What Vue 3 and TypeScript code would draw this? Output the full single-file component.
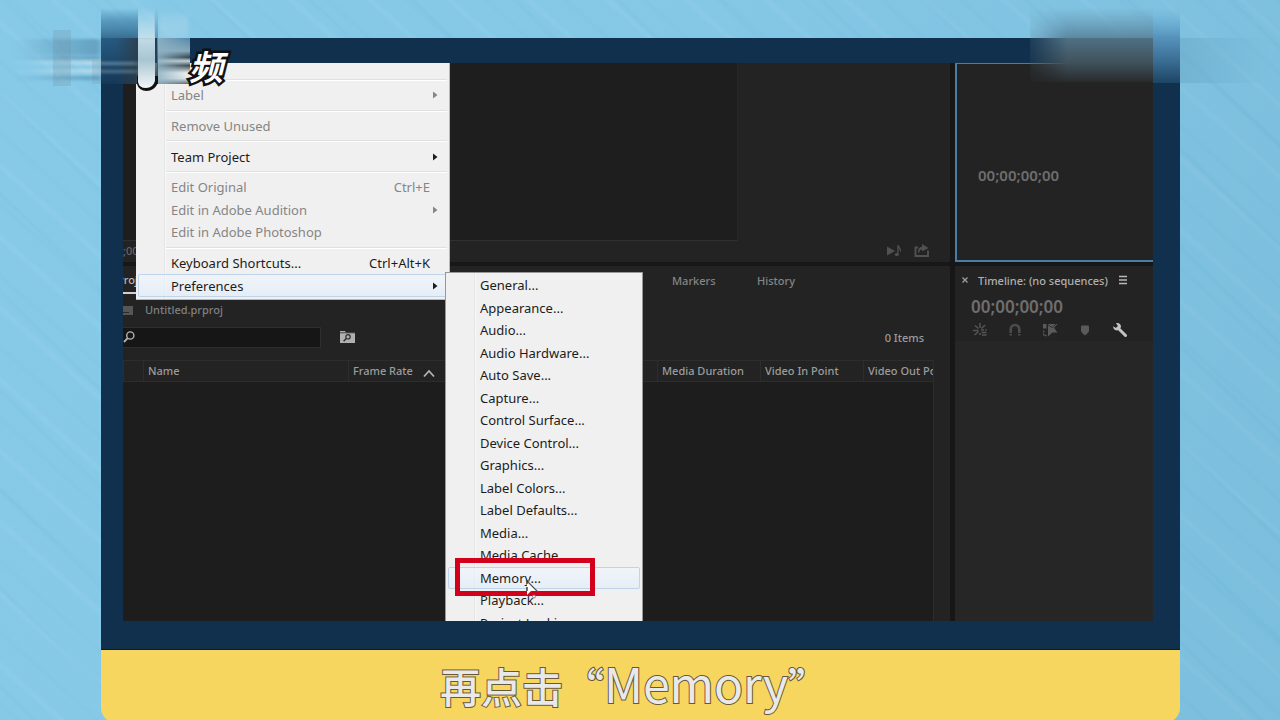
<script setup lang="ts">
import { ref } from 'vue'

interface MenuItem {
  label: string
  shortcut?: string
  submenu?: boolean
  disabled?: boolean
  active?: boolean
}

const editGroups: MenuItem[][] = [
  [{ label: 'Label', submenu: true, disabled: true }],
  [{ label: 'Remove Unused', disabled: true }],
  [{ label: 'Team Project', submenu: true }],
  [
    { label: 'Edit Original', shortcut: 'Ctrl+E', disabled: true },
    { label: 'Edit in Adobe Audition', submenu: true, disabled: true },
    { label: 'Edit in Adobe Photoshop', disabled: true },
  ],
  [
    { label: 'Keyboard Shortcuts...', shortcut: 'Ctrl+Alt+K' },
    { label: 'Preferences', submenu: true, active: true },
  ],
]

const preferences: string[] = [
  'General...', 'Appearance...', 'Audio...', 'Audio Hardware...', 'Auto Save...',
  'Capture...', 'Control Surface...', 'Device Control...', 'Graphics...',
  'Label Colors...', 'Label Defaults...', 'Media...', 'Media Cache...',
  'Memory...', 'Playback...', 'Project Locking...',
]

const query = ref('')
</script>

<template>
  <div class="page">
    <main class="frame">
      <div class="screen">
        <section class="panel source">
          <div class="video"></div>
          <div class="transport">
            <span>;00</span>
            <svg class="icon-play" viewBox="0 0 18 16" width="18" height="16">
              <path d="M2 3.500l8 4.500-8 4.500z" fill="#515151" />
              <path d="M13 2v9M13 2c.5 3 3 3 2.500 6.500" fill="none" stroke="#515151" stroke-width="1.300" />
              <ellipse cx="11.800" cy="11.500" rx="2" ry="1.600" fill="#515151" />
            </svg>
            <svg viewBox="0 0 18 16" width="18" height="16">
              <path d="M5 4.500H2.500V13H15V7.500" fill="none" stroke="#515151" stroke-width="1.900" />
              <path d="M5 9.500c0-4 1.500-5.500 4-5.500V1l6.500 4L9 8.500V6.500C7 6.500 6.500 7.500 6.500 9.500z" fill="#515151" />
            </svg>
          </div>
        </section>

        <section class="panel program">
          <span class="timecode small">00;00;00;00</span>
        </section>

        <section class="panel project">
          <div class="tabs">
            <button type="button" class="tab current">Project</button>
            <button type="button" class="tab">Markers</button>
            <button type="button" class="tab">History</button>
          </div>
          <div class="path">
            <svg viewBox="0 0 10 12" width="10" height="12">
              <path d="M0 3h10v9H0z" fill="#565656" />
              <path d="M0 9.500h6" stroke="#2b2b2b" />
            </svg>
            <span>Untitled.prproj</span>
          </div>
          <div class="search-row">
            <label class="search">
              <svg viewBox="0 0 12 14" width="12" height="14">
                <circle cx="7.300" cy="5.500" r="3.600" fill="none" stroke="#b4b4b4" stroke-width="1.400" />
                <path d="M4.700 8.200L1 12" stroke="#b4b4b4" stroke-width="1.800" />
              </svg>
              <input v-model="query" type="text" aria-label="Search project" />
            </label>
            <button type="button" class="bin" aria-label="Search bin">
              <svg viewBox="0 0 16 14" width="16" height="14">
                <path d="M1 1h5l1 1.500h9V13H1z" fill="#b0b0b0" />
                <path d="M0 2.800h16" stroke="#232323" stroke-width=".8" />
                <circle cx="9" cy="6.800" r="2.200" fill="none" stroke="#2a2a2a" stroke-width="1.200" />
                <path d="M7.300 8.500l-2.700 2.700" stroke="#2a2a2a" stroke-width="1.400" />
              </svg>
            </button>
            <span class="count">0 Items</span>
          </div>
          <div class="listing">
            <table>
              <colgroup>
                <col class="c-tag" /><col class="c-name" /><col class="c-std" /><col class="c-std" />
                <col class="c-std" /><col class="c-std" /><col class="c-std" /><col />
              </colgroup>
              <thead>
                <tr>
                  <th></th>
                  <th>Name</th>
                  <th>
                    Frame Rate
                    <svg class="sort" viewBox="0 0 14 10" width="14" height="10">
                      <path d="M2 8.500l5-5.500 5 5.500" fill="none" stroke="#b4b4b4" stroke-width="1.800" />
                    </svg>
                  </th>
                  <th></th>
                  <th></th>
                  <th>Media Duration</th>
                  <th>Video In Point</th>
                  <th>Video Out Point</th>
                </tr>
              </thead>
            </table>
          </div>
        </section>

        <section class="panel timeline">
          <div class="timeline-head">
            <button type="button" class="close" aria-label="Close">
              <svg viewBox="0 0 8 8" width="8" height="8">
                <path d="M1.500 1.500l5 5M6.500 1.500l-5 5" stroke="#a0a0a0" stroke-width="1.200" />
              </svg>
            </button>
            <span class="timeline-title">Timeline: (no sequences)</span>
            <button type="button" class="burger" aria-label="Panel menu">
              <svg viewBox="0 0 10 10" width="10" height="10">
                <path d="M1 1.500h8M1 5h8M1 8.500h8" stroke="#b8b8b8" stroke-width="1.300" />
              </svg>
            </button>
          </div>
          <span class="timecode">00;00;00;00</span>
          <div class="tools">
            <button type="button" aria-label="Nest sequences">
              <svg viewBox="0 0 16 16" width="16" height="16">
                <g stroke="#555" stroke-width="1.500" fill="none">
                  <path d="M8 1v5M3 3.500l3.500 3M13 3L9.500 6.500M1 8.500h5.500M2.500 13l4-3.500M9 8h3M9.500 10.500h5M10 13h4.500M8 11v2M13 8h1.500" />
                </g>
              </svg>
            </button>
            <button type="button" aria-label="Snap">
              <svg viewBox="0 0 16 16" width="16" height="16">
                <path d="M3.700 11V7.300a4.300 4.300 0 0 1 8.600 0V11" fill="none" stroke="#4c4c4c" stroke-width="2.600" />
                <path d="M2.400 12.800H5M11 12.800h2.600" stroke="#4c4c4c" stroke-width="1.500" />
              </svg>
            </button>
            <button type="button" aria-label="Linked selection">
              <svg viewBox="0 0 16 16" width="16" height="16">
                <path d="M1 2h3.500v4.500H1zM6 2h9.500L12 5.800l3.500 4.700h-5L6 14.500z" fill="#5a5a5a" />
                <path d="M1.600 8.500v5H5" fill="none" stroke="#5a5a5a" stroke-width="1.300" stroke-dasharray="2 1" />
                <path d="M5.500 2.500l4.500 3 4-3.500" fill="none" stroke="#232323" stroke-width=".8" />
              </svg>
            </button>
            <button type="button" aria-label="Add marker">
              <svg viewBox="0 0 16 16" width="16" height="16">
                <path d="M4 4.500q0-1 1-1h6q1 0 1 1V9q0 1-4 4.500Q4 10 4 9z" fill="#5a5a5a" />
              </svg>
            </button>
            <button type="button" aria-label="Settings">
              <svg viewBox="0 0 16 16" width="16" height="16">
                <path d="M6 6L13.500 13.500" stroke="#c4c4c4" stroke-width="3" stroke-linecap="round" />
                <path d="M4 1.200L6 4 4 6 1.200 4.300C1 7 3 9 6 8.300l3-3C9.300 2.500 7 .5 4 1.200z" fill="#c4c4c4" />
              </svg>
            </button>
          </div>
          <div class="tracks"></div>
        </section>

        <div class="menu edit-menu" role="menu">
          <template v-for="(group, g) in editGroups" :key="g">
            <hr />
            <button
              v-for="item in group"
              :key="item.label"
              type="button"
              role="menuitem"
              class="item"
              :class="{ active: item.active }"
              :disabled="item.disabled"
            >
              <span>{{ item.label }}</span>
              <span v-if="item.shortcut" class="shortcut">{{ item.shortcut }}</span>
              <svg v-if="item.submenu" class="arrow" viewBox="0 0 5 8" width="5" height="8">
                <path d="M0 .5l4.500 3.500L0 7.500z" fill="currentColor" />
              </svg>
            </button>
          </template>
        </div>

        <div class="menu preferences" role="menu">
          <button
            v-for="label in preferences"
            :key="label"
            type="button"
            role="menuitem"
            class="item"
            :class="{ active: label === 'Memory...' }"
          >
            {{ label }}
          </button>
        </div>

        <div class="highlight"></div>
        <svg class="cursor" viewBox="0 0 14 22" width="14" height="22">
          <path d="M1 1v15l4-4h7z" fill="#fdfdfd" />
          <path d="M1 2l11 11" stroke="#555" stroke-width="1.200" />
          <path d="M1 1v4M1 8v4" stroke="#222" stroke-width="1.300" />
          <circle cx="8" cy="17.500" r="1.500" fill="#eee" stroke="#777" stroke-width=".8" />
        </svg>
      </div>
    </main>

    <footer class="caption" lang="zh-CN">
      <p>再点击“<span>Memory</span>”</p>
    </footer>

    <div class="logo" lang="zh-CN">
      <svg viewBox="0 0 190 100" width="190" height="100">
        <defs>
          <filter id="softX" x="-10%" y="-10%" width="120%" height="120%">
            <feGaussianBlur stdDeviation="3 1.500" />
          </filter>
          <filter id="softY" x="-10%" y="-20%" width="120%" height="140%">
            <feGaussianBlur stdDeviation="1.500 3" />
          </filter>
          <linearGradient id="drop" x1="0" y1="0" x2="0" y2="1">
            <stop offset="0" stop-color="#2f6e98" stop-opacity="0" />
            <stop offset=".4" stop-color="#2f6e98" stop-opacity=".5" />
            <stop offset="1" stop-color="#24587f" stop-opacity=".8" />
          </linearGradient>
          <linearGradient id="column" x1="0" y1="0" x2="0" y2="1">
            <stop offset="0" stop-color="#2b618a" />
            <stop offset="1" stop-color="#16395a" />
          </linearGradient>
          <linearGradient id="shade" x1="0" y1="0" x2="1" y2="0">
            <stop offset="0" stop-color="#2c3d49" stop-opacity="0" />
            <stop offset="1" stop-color="#2c3d49" stop-opacity=".85" />
          </linearGradient>
          <linearGradient id="lite" x1="0" y1="0" x2="0" y2="1">
            <stop offset="0" stop-color="#c8e4ef" stop-opacity="0" />
            <stop offset=".4" stop-color="#c8e2ed" stop-opacity=".95" />
            <stop offset=".65" stop-color="#a9c5d2" />
            <stop offset="1" stop-color="#f3f6f6" />
          </linearGradient>
          <linearGradient id="edge" x1="0" y1="0" x2="0" y2="1">
            <stop offset="0" stop-color="#35637f" stop-opacity="0" />
            <stop offset="1" stop-color="#2c3f4b" />
          </linearGradient>
          <linearGradient id="haze" x1="0" y1="0" x2="0" y2="1">
            <stop offset="0" stop-color="#5288aa" />
            <stop offset=".28" stop-color="#86a9bb" />
            <stop offset=".42" stop-color="#33424c" />
            <stop offset=".5" stop-color="#cdd6da" />
            <stop offset=".6" stop-color="#3c484f" />
            <stop offset=".76" stop-color="#f3f5f5" />
            <stop offset=".88" stop-color="#e6eaeb" />
            <stop offset="1" stop-color="#56636a" />
          </linearGradient>
          <linearGradient id="hazeX" x1="0" y1="0" x2="1" y2="0">
            <stop offset="0" stop-color="#8fb2c3" stop-opacity=".9" />
            <stop offset="1" stop-color="#8fb2c3" stop-opacity="0" />
          </linearGradient>
          <linearGradient id="side" x1="0" y1="0" x2="1" y2="0">
            <stop offset="0" stop-color="#3f7597" stop-opacity="0" />
            <stop offset="1" stop-color="#3f7597" stop-opacity=".5" />
          </linearGradient>
          <linearGradient id="sidelite" x1="0" y1="0" x2="1" y2="0">
            <stop offset="0" stop-color="#d5e4ea" stop-opacity="0" />
            <stop offset="1" stop-color="#d5e4ea" stop-opacity=".7" />
          </linearGradient>
        </defs>
        <g filter="url(#softX)">
          <rect x="14" y="39" width="87" height="16" fill="url(#side)" />
          <rect x="14" y="56" width="87" height="4" fill="url(#side)" />
          <rect x="14" y="61" width="87" height="4" fill="url(#sidelite)" />
          <rect x="14" y="69" width="87" height="4" fill="url(#sidelite)" />
          <rect x="14" y="76" width="87" height="4" fill="url(#side)" />
        </g>
        <rect x="53" y="30" width="18" height="56" fill="#6c8c9c" opacity=".24" />
        <rect x="92" y="60" width="9" height="24" fill="#6c8c9c" opacity=".2" />
        <rect x="101" y="8" width="37" height="30" fill="url(#drop)" />
        <rect x="101" y="38" width="37" height="46" fill="url(#column)" opacity=".85" />
        <rect x="115" y="38" width="23" height="46" fill="url(#shade)" />
        <g filter="url(#softX)">
          <rect x="98" y="62" width="40" height="3" fill="#9dbccb" opacity=".5" />
          <rect x="98" y="70" width="40" height="3" fill="#9dbccb" opacity=".4" />
        </g>
        <g filter="url(#softY)">
          <rect x="160" y="16" width="28" height="22" fill="#b4d8e8" opacity=".35" />
        </g>
        <rect x="157" y="38" width="33" height="46" fill="url(#haze)" />
        <rect x="157" y="38" width="33" height="46" fill="url(#hazeX)" />
        <rect x="154" y="8" width="4" height="76" fill="url(#edge)" />
        <path d="M137 76v8q2 7 9.500 7t11.500-8v-7z" fill="#111" />
        <path d="M138 8h17v73q-2 7-9 7t-8-6z" fill="url(#lite)" />
      </svg>
      <span>频</span>
    </div>

    <svg class="smear" viewBox="0 0 250 90" width="250" height="90">
      <defs>
        <linearGradient id="fadeTop" x1="0" y1="0" x2="0" y2="1">
          <stop offset="0" stop-color="#5f8ba3" stop-opacity="0" />
          <stop offset="1" stop-color="#58819a" stop-opacity=".9" />
        </linearGradient>
        <linearGradient id="fadeMid" x1="0" y1="0" x2="0" y2="1">
          <stop offset="0" stop-color="#4f7184" />
          <stop offset=".55" stop-color="#40525c" />
          <stop offset="1" stop-color="#282b2d" />
        </linearGradient>
        <linearGradient id="fadeBlue" x1="0" y1="0" x2="0" y2="1">
          <stop offset="0" stop-color="#66abd2" stop-opacity="0" />
          <stop offset=".4" stop-color="#5591ba" />
          <stop offset=".7" stop-color="#3b6e95" />
          <stop offset="1" stop-color="#1d4463" />
        </linearGradient>
        <linearGradient id="fadeOut" x1="0" y1="0" x2="1" y2="0">
          <stop offset="0" stop-color="#68a6c6" stop-opacity=".5" />
          <stop offset="1" stop-color="#68a6c6" stop-opacity="0" />
        </linearGradient>
        <linearGradient id="maskX" x1="0" y1="0" x2="1" y2="0">
          <stop offset="0" stop-color="#fff" stop-opacity=".2" />
          <stop offset=".3" stop-color="#fff" />
        </linearGradient>
        <mask id="soft"><rect width="124" height="90" fill="url(#maskX)" /></mask>
      </defs>
      <g mask="url(#soft)">
        <rect y="8" width="123" height="30" fill="url(#fadeTop)" />
        <rect y="38" width="123" height="44" fill="url(#fadeMid)" />
      </g>
      <rect x="123" y="8" width="27" height="75" fill="url(#fadeBlue)" />
      <rect x="150" y="38" width="90" height="45" fill="url(#fadeOut)" />
    </svg>
  </div>
</template>

<style>
body {
  margin: 0;
}
</style>

<style scoped>
.page {
  position: relative;
  box-sizing: border-box;
  display: flex;
  flex-direction: column;
  min-height: 100vh;
  padding: 38px 100px 0 101px;
  overflow: hidden;
  background:
    repeating-linear-gradient(42deg, transparent 0 9px, rgba(70, 150, 190, 0.05) 12px, transparent 16px 37px, rgba(255, 255, 255, 0.05) 41px, transparent 45px 53px),
    repeating-linear-gradient(44deg, transparent 0 20px, rgba(60, 140, 180, 0.06) 24px, transparent 27px 71px),
    linear-gradient(100deg, #87cae8 0%, #85c8e6 50%, #7bbedd 100%);
  font-family: "Noto Sans", "Noto Sans CJK SC", sans-serif;
  font-size: 11px;
  font-weight: 500;
  color: #9c9c9c;
}
button {
  margin: 0;
  padding: 0;
  border: 0;
  background: none;
  color: inherit;
  font: inherit;
  text-align: left;
}
svg {
  display: block;
  flex: none;
}
.frame {
  flex: 1;
  display: flex;
  padding: 25px 27px 28px 22px;
  background: #10304e;
  border-bottom: 1px solid #0c1c2c;
}
.screen {
  position: relative;
  flex: 1;
  min-width: 0;
  display: grid;
  grid-template-columns: minmax(0, 1fr) 198px;
  grid-template-rows: 199px minmax(0, 1fr);
  gap: 4px 5px;
  overflow: hidden;
  background: #171717;
}
.panel {
  display: flex;
  flex-direction: column;
  min-width: 0;
  background: #232323;
  white-space: nowrap;
}
.video {
  height: 177px;
  margin-right: 212px;
  background: #1e1e1e;
  border-right: 1px solid #262626;
  border-bottom: 1px solid #303030;
}
.transport {
  flex: 1;
  display: flex;
  align-items: center;
  gap: 10px;
  padding: 0 19px 2px 0;
  color: #666;
}
.icon-play {
  margin-left: auto;
}
.program {
  border: solid #4a7ca8;
  border-width: 1px 0 2px 2px;
  justify-content: center;
  padding: 26px 0 0 21px;
}
.timecode {
  font-size: 17px;
  line-height: 22px;
  font-weight: 600;
  color: #6e6e6e;
}
.timecode.small {
  font-size: 15px;
}
.tabs {
  display: grid;
  grid-template-columns: 549px 85px 1fr;
  height: 28px;
}
.tab {
  justify-self: start;
  color: #858585;
}
.tab.current {
  margin-left: -6px;
  border-bottom: 2px solid #d0d0d0;
  color: #b8b8b8;
}
.path {
  display: flex;
  align-items: center;
  gap: 12px;
  height: 30px;
  color: #808080;
}
.search-row {
  display: flex;
  align-items: center;
  height: 26px;
  padding-right: 26px;
  margin-bottom: 10px;
}
.search {
  box-sizing: border-box;
  display: flex;
  align-items: center;
  width: 198px;
  height: 21px;
  background: #161616;
  border: 1px solid #2e2e2e;
  border-left: 0;
}
.search input {
  flex: 1;
  min-width: 0;
  border: 0;
  padding: 0 4px;
  outline: 0;
  background: none;
  color: #b4b4b4;
  font: inherit;
}
.bin {
  margin-left: 18px;
}
.count {
  margin-left: auto;
}
.listing {
  flex: 1;
  margin-right: 16px;
  overflow: hidden;
  background: #1d1d1d;
  border-right: 1px solid #2c2c2c;
}
table {
  width: 100%;
  table-layout: fixed;
  border-collapse: collapse;
}
.c-tag {
  width: 20px;
}
.c-name {
  width: 205px;
}
.c-std {
  width: 103px;
}
th {
  height: 20px;
  padding: 0 0 0 4px;
  overflow: hidden;
  background: #232323;
  border: solid #2d2d2d;
  border-width: 1px 0 1px 1px;
  font-weight: inherit;
  line-height: 16px;
  text-align: left;
}
.sort {
  display: inline-block;
  margin-left: 6px;
  vertical-align: -3px;
}
.timeline-head {
  display: flex;
  align-items: center;
  height: 28px;
  padding-left: 6px;
  color: #b0b0b0;
}
.timeline-title {
  margin: 0 10px 0 9px;
}
.timeline > .timecode {
  height: 24px;
  margin-top: 2px;
  padding-left: 16px;
}
.tools {
  display: flex;
  gap: 19px;
  padding: 2px 0 3px 17px;
}
.tracks {
  flex: 1;
  background: #262626;
}
.menu {
  position: absolute;
  box-sizing: border-box;
  display: flex;
  flex-direction: column;
  background: linear-gradient(90deg, transparent 28px, #e5e5e5 28px 29px, #f8f8f8 29px 30px, transparent 30px) #f0f0f0;
  color: #1c1c1c;
  font-size: 13px;
  font-weight: 400;
  white-space: nowrap;
}
.edit-menu {
  top: 0;
  left: 13px;
  width: 314px;
  height: 237px;
  padding: 13px 2px 2px;
  border: solid #b8b8b8;
  border-width: 0 1px 1px 0;
}
.preferences {
  top: 209px;
  left: 322px;
  width: 198px;
  height: 366px;
  padding: 1px 2px 3px;
  border: 1px solid #979797;
}
hr {
  box-sizing: border-box;
  width: auto;
  height: 2px;
  margin: 3px 0 3px 28px;
  border: 0;
  background: linear-gradient(#e0e0e0 50%, #fff 50%);
}
.item {
  flex: 1;
  box-sizing: border-box;
  display: flex;
  align-items: center;
  min-height: 0;
  padding: 0 8px 0 32px;
  border: 1px solid transparent;
  border-radius: 2px;
  line-height: 18px;
}
.preferences .item {
  padding-left: 31px;
}
.item:disabled {
  color: #858585;
}
.item.active {
  border-color: #bcd5ed;
  background: linear-gradient(rgba(240, 246, 253, 0.7), rgba(226, 236, 248, 0.7));
}
.shortcut {
  margin: 0 8px 0 auto;
}
.arrow {
  margin-left: auto;
}
.highlight {
  position: absolute;
  top: 495px;
  left: 332px;
  box-sizing: border-box;
  width: 140px;
  height: 38px;
  border: 5px solid #d2001a;
}
.cursor {
  position: absolute;
  top: 516px;
  left: 403px;
}
.caption {
  box-sizing: border-box;
  display: flex;
  align-items: center;
  justify-content: center;
  height: 72px;
  margin-bottom: -2px;
  padding: 0 12px 6px 0;
  border-radius: 0 0 14px 14px;
  background: #f6d65f;
}
.caption p {
  margin: 0;
  font-family: "Noto Sans CJK SC", sans-serif;
  font-size: 41px;
  font-weight: 500;
  line-height: 60px;
  color: #e9e9e9;
  -webkit-text-stroke: 2px #67583a;
  paint-order: stroke fill;
}
.caption span {
  font-size: 48px;
  font-weight: 400;
}
.logo {
  position: absolute;
  top: 0;
  left: 0;
  display: flex;
}
.logo span {
  margin: 44px 0 0 -1px;
  font: italic 700 34px/44px "Noto Sans CJK SC", sans-serif;
  color: #fff;
  -webkit-text-stroke: 5px #111;
  paint-order: stroke fill;
}
.smear {
  position: absolute;
  top: 0;
  right: 0;
}
</style>
